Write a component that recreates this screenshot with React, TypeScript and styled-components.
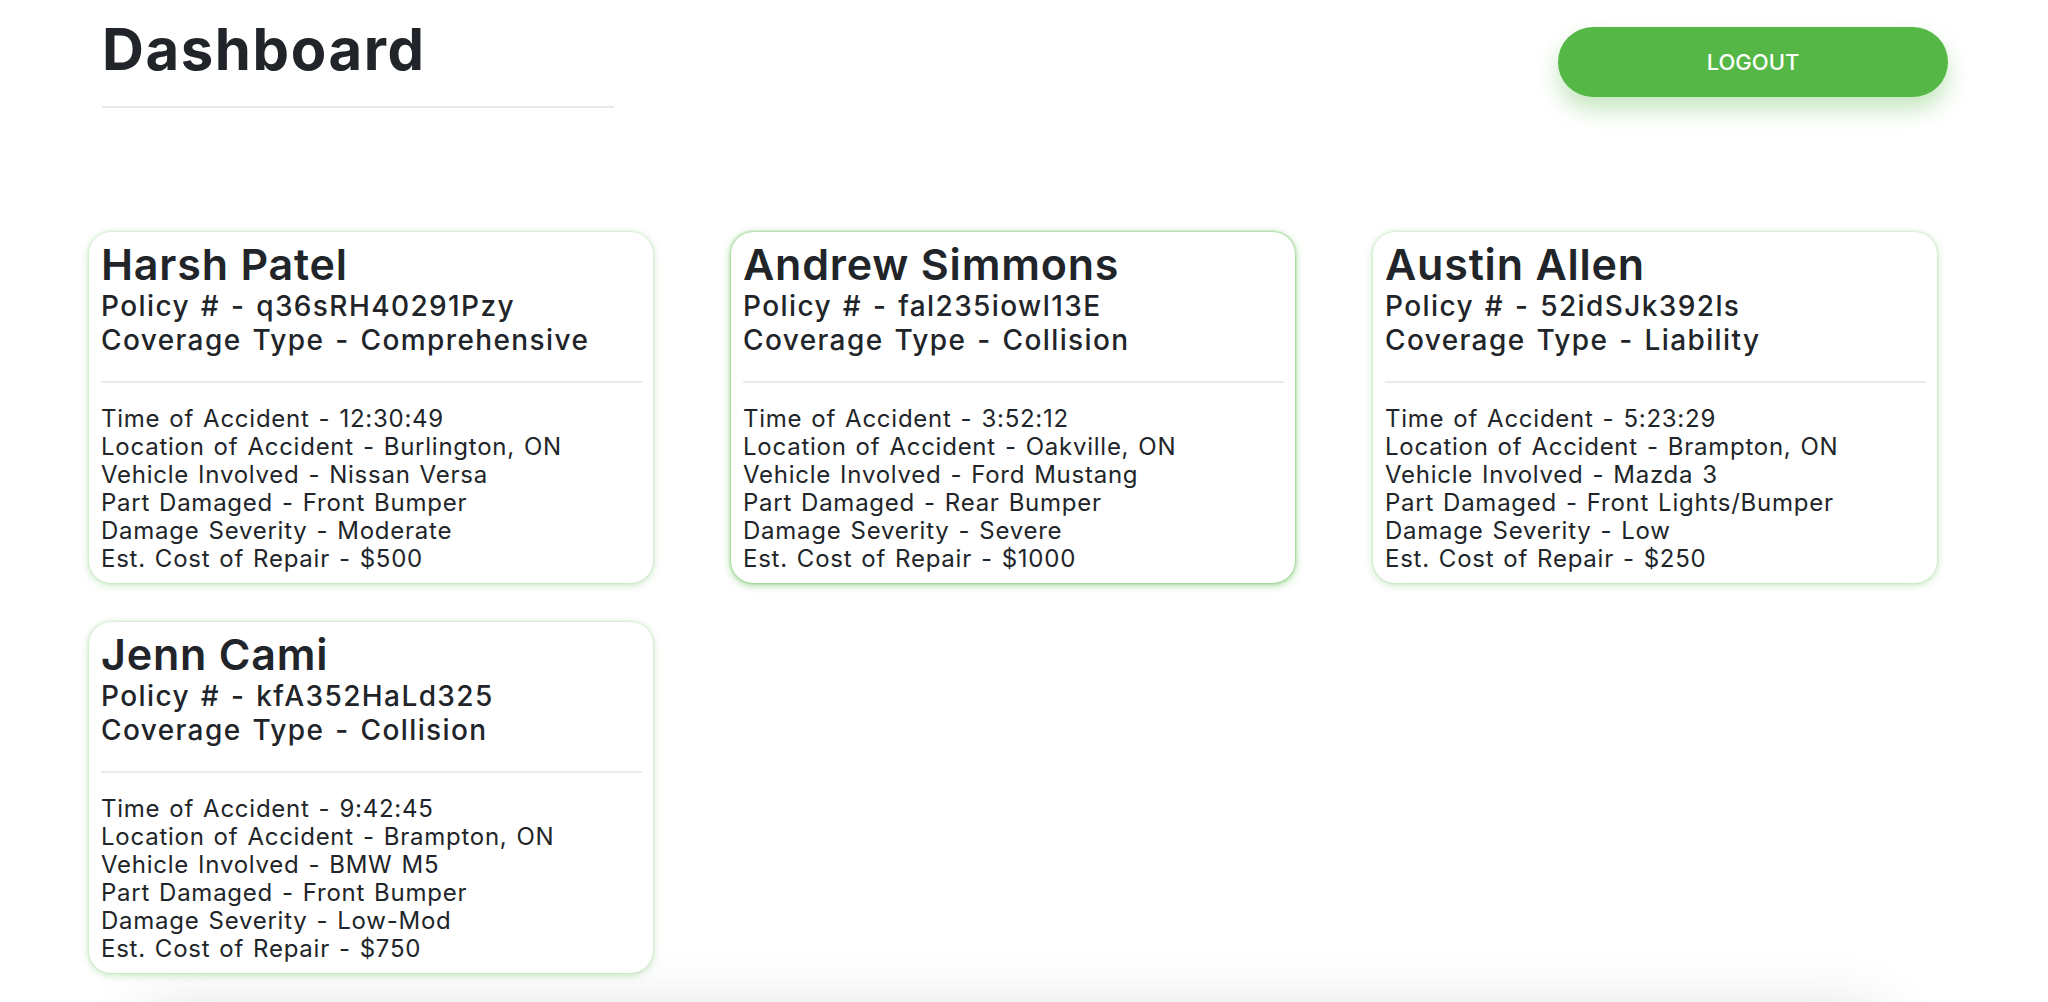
import styled, { createGlobalStyle } from "styled-components";

type Claim = {
  name: string;
  policy: string;
  coverage: string;
  time: string;
  location: string;
  vehicle: string;
  part: string;
  severity: string;
  cost: string;
};

const claims: Claim[] = [
  {
    name: "Harsh Patel",
    policy: "q36sRH40291Pzy",
    coverage: "Comprehensive",
    time: "12:30:49",
    location: "Burlington, ON",
    vehicle: "Nissan Versa",
    part: "Front Bumper",
    severity: "Moderate",
    cost: "$500",
  },
  {
    name: "Andrew Simmons",
    policy: "fal235iowl13E",
    coverage: "Collision",
    time: "3:52:12",
    location: "Oakville, ON",
    vehicle: "Ford Mustang",
    part: "Rear Bumper",
    severity: "Severe",
    cost: "$1000",
  },
  {
    name: "Austin Allen",
    policy: "52idSJk392ls",
    coverage: "Liability",
    time: "5:23:29",
    location: "Brampton, ON",
    vehicle: "Mazda 3",
    part: "Front Lights/Bumper",
    severity: "Low",
    cost: "$250",
  },
  {
    name: "Jenn Cami",
    policy: "kfA352HaLd325",
    coverage: "Collision",
    time: "9:42:45",
    location: "Brampton, ON",
    vehicle: "BMW M5",
    part: "Front Bumper",
    severity: "Low-Mod",
    cost: "$750",
  },
];

function App() {
  return (
    <>
      <GlobalStyle />
      <Page>
        <Header>
          <TitleBlock>
            <PageTitle>Dashboard</PageTitle>
          </TitleBlock>
          <LogoutButton>LOGOUT</LogoutButton>
        </Header>
        <CardGrid>
          {claims.map((c, i) => (
            <Card key={c.policy} $active={i === 1}>
              <Name>{c.name}</Name>
              <SubHead>Policy # - {c.policy}</SubHead>
              <SubHead>Coverage Type - {c.coverage}</SubHead>
              <Divider />
              <Details>
                <div>Time of Accident - {c.time}</div>
                <div>Location of Accident - {c.location}</div>
                <div>Vehicle Involved - {c.vehicle}</div>
                <div>Part Damaged - {c.part}</div>
                <div>Damage Severity - {c.severity}</div>
                <div>Est. Cost of Repair - {c.cost}</div>
              </Details>
            </Card>
          ))}
        </CardGrid>
        <Panel />
      </Page>
    </>
  );
}

const GlobalStyle = createGlobalStyle`
  body {
    margin: 0;
    background: #fff;
    color: #212529;
    font-family: Inter, "Open Sans", sans-serif;
  }
`;

const Page = styled.div`
  width: 2048px;
  overflow: hidden;
  padding-bottom: 80px;
`;

const Header = styled.div`
  display: flex;
  justify-content: space-between;
  align-items: flex-start;
  padding: 0 100px 0 102px;
`;

const TitleBlock = styled.div`
  width: 512px;
  padding-top: 16px;
`;

const PageTitle = styled.h1`
  margin: 0;
  font-size: 58px;
  line-height: 67px;
  font-weight: 700;
  letter-spacing: 1.6px;
  padding-bottom: 23px;
  border-bottom: 2px solid #e8e8e8;
`;

const LogoutButton = styled.button`
  margin-top: 27px;
  width: 390px;
  height: 70px;
  border: none;
  border-radius: 35px;
  background: #55b846;
  color: #fff;
  font-family: inherit;
  font-size: 22px;
  font-weight: 500;
  box-shadow: 0 12px 22px rgba(85, 184, 70, 0.35);
  cursor: pointer;
`;

const CardGrid = styled.div`
  display: grid;
  grid-template-columns: repeat(3, 564px);
  column-gap: 78px;
  row-gap: 39px;
  padding-left: 89px;
  margin-top: 124px;
`;

const Card = styled.div<{ $active?: boolean }>`
  height: 351px;
  box-sizing: border-box;
  padding: 7px 11px 12px 12px;
  border-radius: 22px;
  background: #fff;
  box-shadow: ${(p) =>
    p.$active
      ? "0 0 3px rgba(85, 184, 70, 0.9), 0 2px 9px rgba(85, 184, 70, 0.55)"
      : "0 0 3px rgba(85, 184, 70, 0.35), 0 2px 9px rgba(85, 184, 70, 0.32)"};
`;

const Name = styled.div`
  font-size: 43px;
  line-height: 50px;
  font-weight: 600;
  letter-spacing: 0.8px;
`;

const SubHead = styled.div`
  font-size: 28px;
  line-height: 34px;
  font-weight: 500;
  letter-spacing: 1.4px;
  word-spacing: 2px;
`;

const Divider = styled.div`
  height: 2px;
  background: #ebebeb;
  margin: 24px 0 22px;
`;

const Details = styled.div`
  font-size: 24px;
  line-height: 28px;
  font-weight: 400;
  letter-spacing: 0.75px;
  word-spacing: 1.5px;
`;

const Panel = styled.div`
  height: 300px;
  margin: 40px 168px 0 144px;
  background: #fff;
  box-shadow: 0 0 60px rgba(0, 0, 0, 0.14);
`;

export default App;
